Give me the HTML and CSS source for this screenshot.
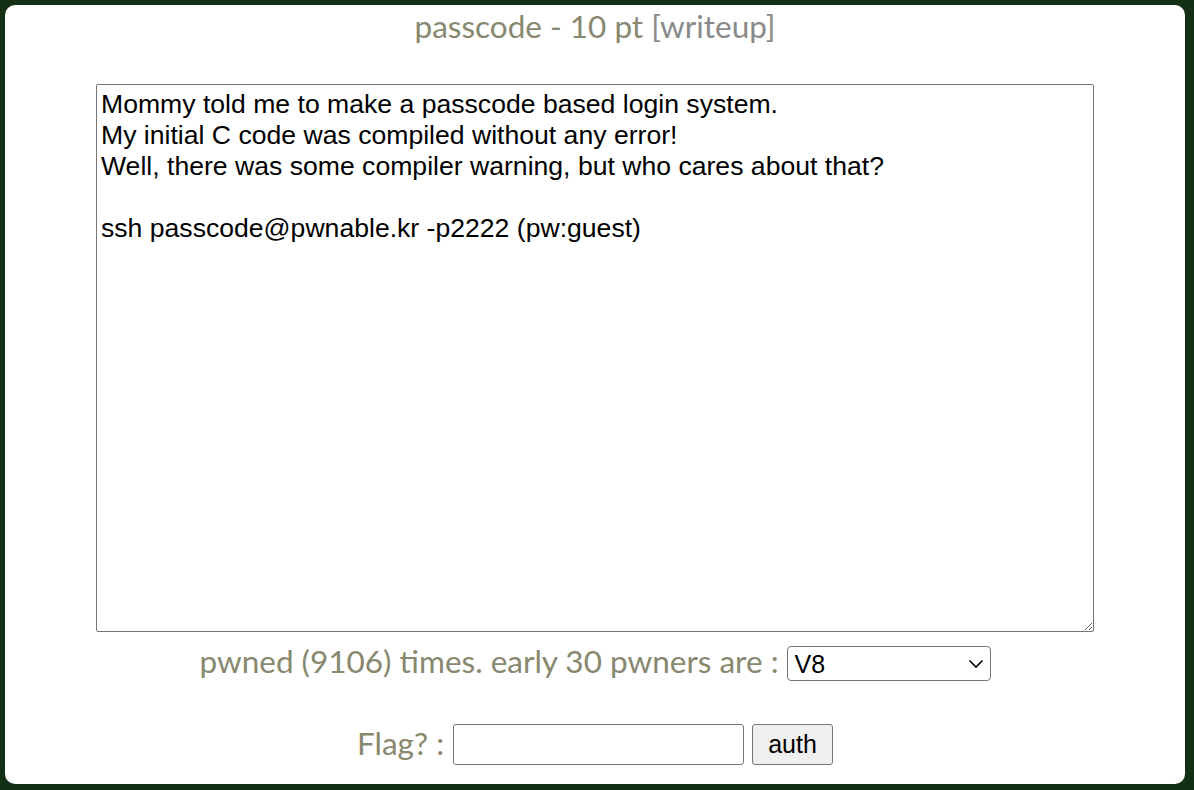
FILE: index.html
```html
<!DOCTYPE html>
<html>
<head>
<meta charset="utf-8">
<link rel="stylesheet" href="styles.css">
</head>
<body>
<div class="panel">
  <div class="title">passcode - 10 pt <span class="writeup">[writeup]</span></div>
  <textarea class="desc">Mommy told me to make a passcode based login system.
My initial C code was compiled without any error!
Well, there was some compiler warning, but who cares about that?

ssh passcode@pwnable.kr -p2222 (pw:guest)</textarea>
  <div class="pwned-row">
    <span class="label">pwned (9106) times. early 30 pwners are :</span>
    <select class="pwners"><option>V8</option></select>
  </div>
  <div class="flag-row">
    <span class="label">Flag? :</span>
    <input class="flag" type="text">
    <button class="auth">auth</button>
  </div>
</div>
</body>
</html>
```

FILE: styles.css
```css
html, body {
  margin: 0;
  padding: 0;
  background: #132f14;
  height: 100%;
}
body {
  padding: 5px 9px 6px 5px;
  box-sizing: border-box;
}
.panel {
  background: #ffffff;
  border-radius: 10px;
  height: 100%;
  box-sizing: border-box;
  display: flex;
  flex-direction: column;
  align-items: center;
  padding-top: 2px;
  font-family: Lato, "Liberation Sans", sans-serif;
  color: #88886f;
}
.title {
  font-size: 31.5px;
  line-height: 38px;
}
.writeup {
  color: #8a8a8a;
}
.desc {
  margin-top: 39px;
  width: 998px;
  height: 548px;
  box-sizing: border-box;
  border: 1px solid #767676;
  border-radius: 2px;
  font-family: "Liberation Sans", Arial, sans-serif;
  font-size: 26.6px;
  line-height: 31px;
  color: #000;
  padding: 4px 4px 2px 4px;
  resize: both;
}
.pwned-row {
  margin-top: 14px;
  display: flex;
  align-items: center;
  gap: 8px;
}
.label {
  font-size: 31.5px;
  line-height: 30px;
  margin-bottom: 5px;
}
.pwners {
  appearance: none;
  -webkit-appearance: none;
  width: 204px;
  height: 35px;
  box-sizing: border-box;
  font-family: "Liberation Sans", Arial, sans-serif;
  font-size: 25px;
  padding: 0 30px 0 7px;
  border: 1px solid #767676;
  border-radius: 4px;
  color: #000;
  background: #fff url("data:image/svg+xml,%3Csvg xmlns='http://www.w3.org/2000/svg' width='16' height='10' viewBox='0 0 16 10'%3E%3Cpath d='M1.5 1.5 L8 8 L14.5 1.5' fill='none' stroke='%23000' stroke-width='1.6'/%3E%3C/svg%3E") no-repeat right 6px center;
}
.flag-row {
  margin-top: 43px;
  display: flex;
  align-items: center;
  gap: 8px;
}
.flag-row .label {
  margin-right: 1px;
  margin-bottom: 3px;
}
.flag {
  width: 291px;
  height: 41px;
  box-sizing: border-box;
  border: 1px solid #767676;
  border-radius: 3px;
  font-size: 24px;
}
.auth {
  width: 81px;
  height: 41px;
  box-sizing: border-box;
  border: 1px solid #767676;
  border-radius: 3px;
  background: #efefef;
  font-family: "Liberation Sans", Arial, sans-serif;
  font-size: 25px;
  color: #000;
  padding: 0;
}
```
